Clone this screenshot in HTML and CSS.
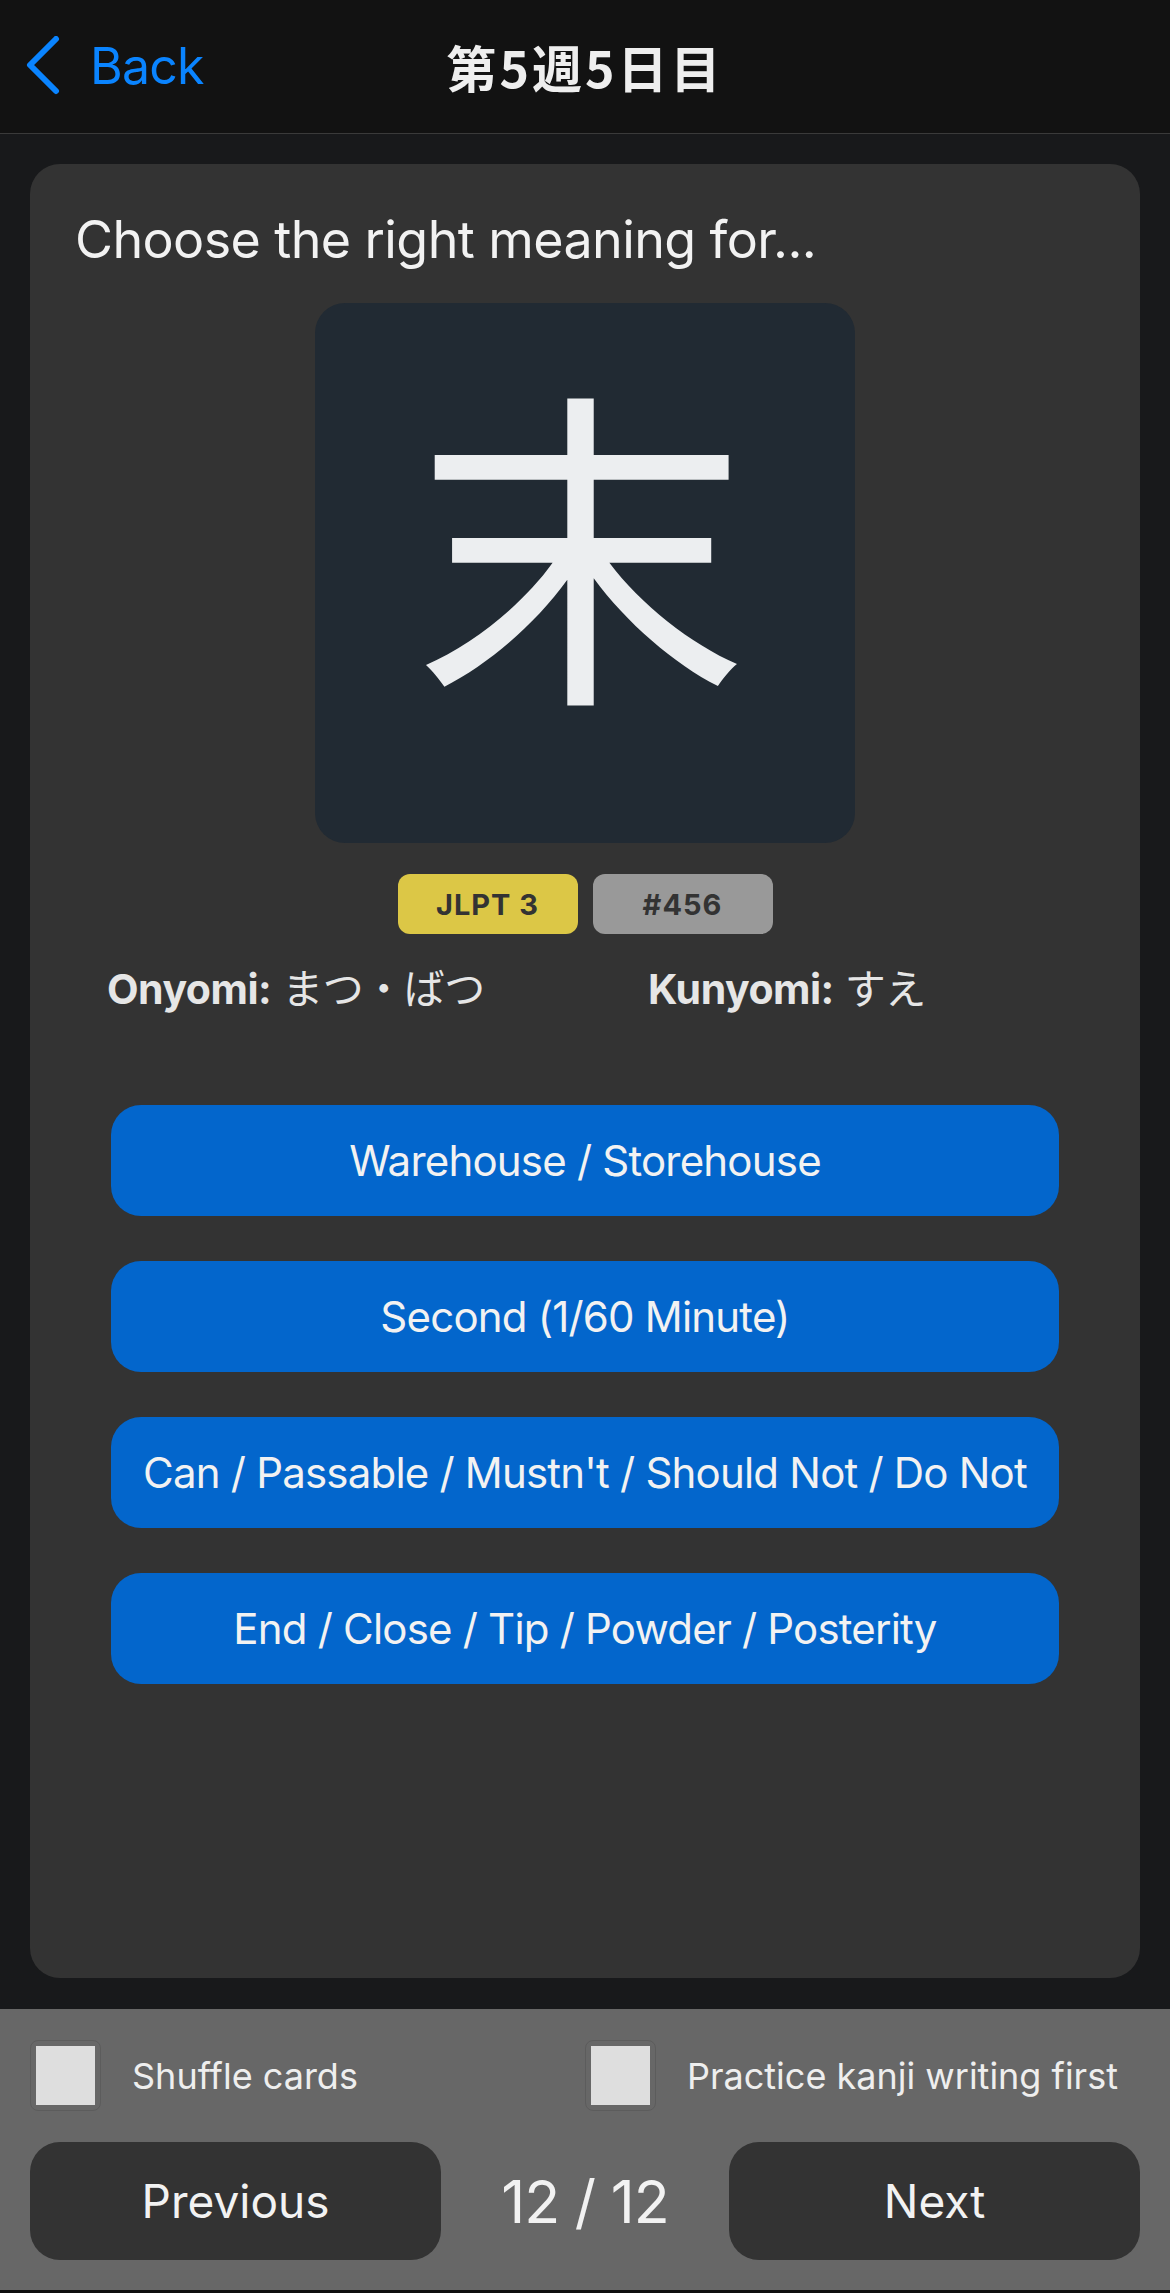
FILE: index.html
```
<!DOCTYPE html>
<html lang="en">
<head>
<meta charset="utf-8">
<title>第5週5日目</title>
<link rel="stylesheet" href="styles.css">
</head>
<body>
<div class="app">
  <header class="nav">
    <a class="back" href="#">
      <svg class="chev" width="36" height="60" viewBox="0 0 36 60"><polyline points="30,3 4,29 30,55" fill="none" stroke="#0a84ff" stroke-width="6" stroke-linecap="round" stroke-linejoin="round"/></svg>
      <span>Back</span>
    </a>
    <h1 class="title">第5週5日目</h1>
    <div></div>
  </header>
  <main class="main">
    <section class="card">
      <p class="prompt">Choose the right meaning for...</p>
      <div class="kanji-box"><span class="kanji">末</span></div>
      <div class="badges">
        <span class="badge badge-jlpt">JLPT 3</span>
        <span class="badge badge-num">#456</span>
      </div>
      <div class="readings">
        <div class="reading reading-on"><b>Onyomi:</b> まつ・ばつ</div>
        <div class="reading"><b>Kunyomi:</b> すえ</div>
      </div>
      <div class="answers">
        <button class="answer">Warehouse / Storehouse</button>
        <button class="answer">Second (1/60 Minute)</button>
        <button class="answer">Can / Passable / Mustn't / Should Not / Do Not</button>
        <button class="answer">End / Close / Tip / Powder / Posterity</button>
      </div>
    </section>
  </main>
  <footer class="footer">
    <div class="options">
      <label class="option"><span class="check"><span class="check-fill"></span></span><span>Shuffle cards</span></label>
      <label class="option"><span class="check"><span class="check-fill"></span></span><span>Practice kanji writing first</span></label>
    </div>
    <div class="pager">
      <button class="pager-btn">Previous</button>
      <div class="counter">12 / 12</div>
      <button class="pager-btn">Next</button>
    </div>
  </footer>
</div>
</body>
</html>
```
FILE: styles.css
```
* { box-sizing: border-box; }
html, body { margin: 0; padding: 0; }
body {
  background: #0f0f0f;
  font-family: Inter, "Noto Sans CJK JP", sans-serif;
  color: #eeeeee;
}
.app {
  width: 1170px;
  height: 2290px;
  display: flex;
  flex-direction: column;
}
.nav {
  height: 134px;
  flex: none;
  background: #121212;
  border-bottom: 1px solid #3a3a3a;
  display: grid;
  grid-template-columns: 1fr auto 1fr;
  align-items: center;
  padding: 0 0 2px 0;
}
.back {
  display: flex;
  align-items: center;
  color: #0a84ff;
  text-decoration: none;
  font-size: 50px;
  letter-spacing: -0.8px;
  padding-left: 26px;
  gap: 28px;
}
.chev { display: block; }
.title {
  margin: 0;
  font-family: "Noto Sans CJK JP", sans-serif;
  font-size: 50px;
  font-weight: 700;
  color: #eeeeee;
  letter-spacing: 3px;
}
.main {
  flex: 1;
  background: #18191b;
  padding: 30px 30px 31px;
  display: flex;
}
.card {
  flex: 1;
  background: #333333;
  border-radius: 30px;
  padding: 45px 0 0;
  display: flex;
  flex-direction: column;
}
.prompt {
  margin: 0;
  padding-left: 45px;
  font-size: 52px;
  letter-spacing: -0.6px;
  line-height: 1.2;
  color: #f2f2f2;
}
.kanji-box {
  align-self: center;
  margin-top: 32px;
  width: 540px;
  height: 540px;
  background: #212a33;
  border-radius: 30px;
  display: flex;
  align-items: center;
  justify-content: center;
  padding-bottom: 78px;
  padding-right: 8px;
}
.kanji {
  font-family: "Noto Sans CJK JP", sans-serif;
  font-size: 334px;
  line-height: 1;
  color: #eceef0;
}
.badges {
  margin-top: 31px;
  display: flex;
  justify-content: center;
  gap: 15px;
}
.badge {
  width: 180px;
  height: 60px;
  border-radius: 12px;
  display: flex;
  align-items: center;
  justify-content: center;
  font-weight: 700;
  font-size: 29px;
  letter-spacing: 1px;
  color: #333333;
}
.badge-jlpt { background: #dcc746; }
.badge-num { background: #999999; }
.readings {
  margin-top: 30px;
  display: flex;
  padding-left: 77px;
  font-size: 41px;
  letter-spacing: -0.5px;
  line-height: 50px;
  color: #e6e6e6;
}
.reading-on { width: 541px; }
.reading b { font-weight: 700; }
.answers {
  margin: 91px 81px 0;
  display: flex;
  flex-direction: column;
  gap: 45px;
}
.answer {
  height: 111px;
  border: none;
  border-radius: 30px;
  background: #0366cc;
  color: #f2f2f2;
  font-family: Inter, sans-serif;
  font-size: 42px;
  letter-spacing: -0.8px;
  padding: 0;
}
.footer {
  height: 281px;
  flex: none;
  background: #676767;
  padding: 31px 30px 30px;
  display: flex;
  flex-direction: column;
  gap: 31px;
}
.options {
  display: grid;
  grid-template-columns: 1fr 1fr;
}
.option {
  display: flex;
  align-items: center;
  gap: 31px;
  font-size: 36px;
  color: #eeeeee;
}
.check {
  width: 71px;
  height: 71px;
  border: 1px solid #5c5c5c;
  border-radius: 8px;
  padding: 5px;
  display: flex;
}
.check-fill {
  flex: 1;
  background: #dedede;
}
.pager {
  display: grid;
  grid-template-columns: 411px 1fr 411px;
  align-items: center;
}
.pager-btn {
  height: 118px;
  border: none;
  border-radius: 30px;
  background: #333333;
  color: #f2f2f2;
  font-family: Inter, sans-serif;
  font-size: 46px;
  padding: 0;
}
.counter {
  text-align: center;
  font-size: 59px;
  letter-spacing: -1px;
  color: #f2f2f2;
}
```
